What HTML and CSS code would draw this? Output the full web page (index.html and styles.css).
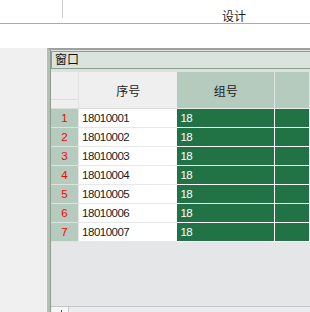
FILE: index.html
```html
<!DOCTYPE html>
<html lang="zh">
<head>
    <meta charset="utf-8">
    <title>设计</title>
    <link rel="stylesheet" href="styles.css">
</head>
<body>
    <div class="topbar">
        <span class="sep"></span>
        <span class="tab-label">设计</span>
    </div>
    <div class="gap"></div>
    <div class="workspace">
        <div class="side"></div>
        <div class="window">
            <div class="pane">
                <div class="caption">窗口</div>
                <table class="grid">
                    <tr class="head">
                        <th class="rn"><div class="rn-top"></div></th>
                        <th class="seq">序号</th>
                        <th class="grp">组号</th>
                        <th class="more"></th>
                    </tr>
                    <tr><td class="rn">1</td><td class="seq">18010001</td><td class="grp">18</td><td class="more"></td></tr>
                    <tr><td class="rn">2</td><td class="seq">18010002</td><td class="grp">18</td><td class="more"></td></tr>
                    <tr><td class="rn">3</td><td class="seq">18010003</td><td class="grp">18</td><td class="more"></td></tr>
                    <tr><td class="rn">4</td><td class="seq">18010004</td><td class="grp">18</td><td class="more"></td></tr>
                    <tr><td class="rn">5</td><td class="seq">18010005</td><td class="grp">18</td><td class="more"></td></tr>
                    <tr><td class="rn">6</td><td class="seq">18010006</td><td class="grp">18</td><td class="more"></td></tr>
                    <tr><td class="rn">7</td><td class="seq">18010007</td><td class="grp">18</td><td class="more"></td></tr>
                </table>
                <div class="filler"></div>
                <div class="bottombar"><span class="add"></span></div>
            </div>
        </div>
    </div>
</body>
</html>
```

FILE: styles.css
```css
html, body {
    margin: 0;
    padding: 0;
}
body {
    width: 310px;
    height: 312px;
    overflow: hidden;
    background: #fff;
    font-family: "Liberation Sans", "Noto Sans CJK SC", sans-serif;
    color: #1a1a1a;
}
.topbar {
    height: 23px;
    border-bottom: 1px solid #ababab;
    display: flex;
    align-items: flex-start;
}
.sep {
    margin-left: 62px;
    width: 1px;
    height: 18px;
    background: #cfcfcf;
}
.tab-label {
    margin-left: 159px;
    margin-top: 10px;
    font-family: "Noto Sans CJK SC", sans-serif;
    font-size: 12px;
    line-height: 12px;
    color: #222;
}
.gap {
    height: 24px;
}
.workspace {
    display: flex;
    height: 264px;
    overflow: hidden;
}
.side {
    width: 47px;
    background: #f0f0f0;
}
.window {
    flex: 1;
    min-width: 0;
    border-left: 3px solid #b2c1b4;
    border-top: 2px solid #a0a0a0;
    background: #dae3dc;
}
.pane {
    height: 100%;
    border-left: 1px solid #8f9a90;
    display: flex;
    flex-direction: column;
    padding-top: 1px;
    box-sizing: border-box;
}
.caption {
    height: 14px;
    padding: 0 0 2px 3px;
    border: 1px solid #8d9e90;
    border-right: none;
    font-family: "Noto Sans CJK SC", sans-serif;
    font-size: 12px;
    line-height: 14px;
    color: #111;
    margin-bottom: 3px;
}
.grid {
    border-collapse: separate;
    border-spacing: 0;
    table-layout: fixed;
    width: 259px;
    background: #e4e6e8;
}
.grid th, .grid td {
    padding: 0;
    height: 18px;
    border-bottom: 1px solid #e3e3e3;
    border-right: 1px solid #e3e3e3;
    overflow: hidden;
    white-space: nowrap;
}
.grid .head th {
    height: 36px;
    font-family: "Noto Sans CJK SC", sans-serif;
    font-size: 12px;
    font-weight: normal;
    color: #222;
    vertical-align: middle;
}
.rn {
    width: 27px;
}
.seq {
    width: 98px;
}
.grp {
    width: 96px;
}
.more {
    width: 34px;
}
.head .rn {
    background: #efefef;
    border-bottom-color: #dcdcdc;
    vertical-align: top;
}
.rn-top {
    height: 18px;
    border-bottom: 1px solid #dcdcdc;
}
.head .seq {
    background: #efefef;
    border-right: none;
    border-bottom-color: #dcdcdc;
}
.head .grp, .head .more {
    background: #b4cbbe;
    border-right-color: #dfe6e1;
    border-bottom-color: #e6ece8;
}
td.rn {
    background: #b4cbbe;
    color: #ff0000;
    text-align: center;
    font-size: 11.5px;
    border-bottom-color: #dbe4de;
    border-right-color: #e6e6e6;
}
td.seq {
    background: #fff;
    border-right: none;
    border-bottom-color: #e8e8e8;
    padding-left: 3px;
    font-size: 11.5px;
    letter-spacing: -0.5px;
}
td.grp, td.more {
    background: #217346;
    color: #fff;
    border-right-color: #fff;
    border-bottom-color: #fff;
}
td.grp {
    padding-left: 3px;
    font-size: 11.5px;
    letter-spacing: -0.5px;
}
.filler {
    flex: 1;
    background: #e4e6e8;
}
.bottombar {
    height: 16px;
    flex: none;
    border-top: 1px solid #c3c6c9;
    background: #eaecee;
    display: flex;
    margin-bottom: -11px;
}
.add {
    position: relative;
    width: 16px;
    margin-left: 1px;
    background: #f7f7f7;
    border-right: 1px solid #c8c8c8;
}
.add::before {
    content: "";
    position: absolute;
    left: 9px;
    top: 3px;
    width: 1px;
    height: 7px;
    background: #444;
}
.add::after {
    content: "";
    position: absolute;
    left: 6px;
    top: 6px;
    width: 7px;
    height: 1px;
    background: #444;
}
```
